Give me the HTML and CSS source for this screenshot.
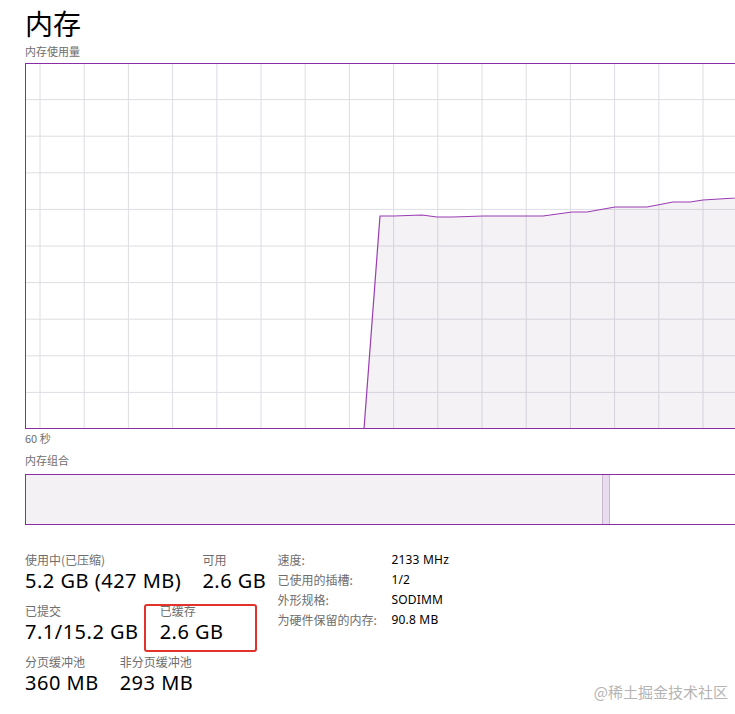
FILE: index.html
```html
<!DOCTYPE html>
<html lang="zh-CN">
<head>
  <meta charset="UTF-8">
  <title>内存</title>
  <link rel="stylesheet" href="styles.css">
</head>
<body>
  <div class="page">
    <h1 class="title">内存</h1>
    <div class="small-label">内存使用量</div>

    <!-- Usage history chart -->
    <div class="chart">
      <svg width="720" height="364" viewBox="0 0 720 364">
        <g class="grid">
          <line x1="14" y1="0" x2="14" y2="364"/>
          <line x1="58.2" y1="0" x2="58.2" y2="364"/>
          <line x1="102.4" y1="0" x2="102.4" y2="364"/>
          <line x1="146.6" y1="0" x2="146.6" y2="364"/>
          <line x1="190.8" y1="0" x2="190.8" y2="364"/>
          <line x1="235" y1="0" x2="235" y2="364"/>
          <line x1="279.2" y1="0" x2="279.2" y2="364"/>
          <line x1="323.4" y1="0" x2="323.4" y2="364"/>
          <line x1="367.6" y1="0" x2="367.6" y2="364"/>
          <line x1="411.8" y1="0" x2="411.8" y2="364"/>
          <line x1="456" y1="0" x2="456" y2="364"/>
          <line x1="500.2" y1="0" x2="500.2" y2="364"/>
          <line x1="544.4" y1="0" x2="544.4" y2="364"/>
          <line x1="588.6" y1="0" x2="588.6" y2="364"/>
          <line x1="632.8" y1="0" x2="632.8" y2="364"/>
          <line x1="677" y1="0" x2="677" y2="364"/>
          <line x1="0" y1="35.6" x2="720" y2="35.6"/>
          <line x1="0" y1="72.2" x2="720" y2="72.2"/>
          <line x1="0" y1="108.8" x2="720" y2="108.8"/>
          <line x1="0" y1="145.4" x2="720" y2="145.4"/>
          <line x1="0" y1="182" x2="720" y2="182"/>
          <line x1="0" y1="218.6" x2="720" y2="218.6"/>
          <line x1="0" y1="255.2" x2="720" y2="255.2"/>
          <line x1="0" y1="291.8" x2="720" y2="291.8"/>
          <line x1="0" y1="328.4" x2="720" y2="328.4"/>
        </g>
        <polygon class="area" points="338,365 354,152 368,152 396,151 411,153 427,153 457,152 517,152 546,148 561,148 589,143 621,143 647,138 664,138 677,136 709,134 720,133 720,365"/>
        <polyline class="usage" points="338,365 354,152 368,152 396,151 411,153 427,153 457,152 517,152 546,148 561,148 589,143 621,143 647,138 664,138 677,136 709,134 720,133"/>
      </svg>
    </div>
    <div class="small-label time-label">60 秒</div>

    <div class="small-label comp-label">内存组合</div>
    <div class="composition">
      <div class="seg in-use"></div>
      <div class="seg modified"></div>
      <div class="seg standby"></div>
    </div>

    <!-- Stats -->
    <div class="stats">
      <div class="stats-left">
        <div class="stat-row">
          <div class="stat">
            <div class="stat-label">使用中(已压缩)</div>
            <div class="stat-value">5.2 GB (427 MB)</div>
          </div>
          <div class="stat">
            <div class="stat-label">可用</div>
            <div class="stat-value">2.6 GB</div>
          </div>
        </div>
        <div class="stat-row">
          <div class="stat">
            <div class="stat-label">已提交</div>
            <div class="stat-value">7.1/15.2 GB</div>
          </div>
          <div class="stat highlighted">
            <div class="stat-label">已缓存</div>
            <div class="stat-value">2.6 GB</div>
          </div>
        </div>
        <div class="stat-row">
          <div class="stat">
            <div class="stat-label">分页缓冲池</div>
            <div class="stat-value">360 MB</div>
          </div>
          <div class="stat">
            <div class="stat-label">非分页缓冲池</div>
            <div class="stat-value">293 MB</div>
          </div>
        </div>
      </div>

      <div class="stats-right">
        <div class="info-row"><span class="info-key">速度:</span><span class="info-val">2133 MHz</span></div>
        <div class="info-row"><span class="info-key">已使用的插槽:</span><span class="info-val">1/2</span></div>
        <div class="info-row"><span class="info-key">外形规格:</span><span class="info-val">SODIMM</span></div>
        <div class="info-row"><span class="info-key">为硬件保留的内存:</span><span class="info-val">90.8 MB</span></div>
      </div>
    </div>
  </div>

  <div class="watermark">@稀土掘金技术社区</div>
</body>
</html>
```

FILE: styles.css
```css
/* Page base */
html, body {
  margin: 0;
  height: 100%;
  overflow: hidden;
  background: #fff;
}

body {
  font-family: "Segoe UI", "Noto Sans", "Noto Sans CJK SC", sans-serif;
  color: #000;
}

.page {
  padding: 3px 0 0 25px;
  width: 760px;
}

/* Heading */
.title {
  margin: 0;
  font-family: "Noto Sans CJK SC", sans-serif;
  font-size: 28px;
  font-weight: normal;
  line-height: 40px;
}

.small-label {
  font-family: "Noto Sans CJK SC", sans-serif;
  font-size: 11px;
  line-height: 16px;
  color: #6e6e6e;
}

/* Usage chart */
.chart {
  margin-top: 4px;
  width: 720px;
  height: 364px;
  border: 1px solid #8a2ca4;
  overflow: hidden;
}

.chart svg {
  display: block;
}

.grid line {
  stroke: #dedde3;
  stroke-width: 1;
}

.area {
  fill: rgba(110, 70, 130, 0.07);
}

.usage {
  fill: none;
  stroke: #9a3cb2;
  stroke-width: 1.2;
}

.time-label {
  margin-top: 1px;
}

.comp-label {
  margin-top: 6px;
}

/* Memory composition bar */
.composition {
  margin-top: 6px;
  width: 720px;
  height: 49px;
  border: 1px solid #8a2ca4;
  display: flex;
}

.seg.in-use {
  width: 576px;
  background: #f4f1f5;
}

.seg.modified {
  width: 6px;
  background: #eadcf0;
  border-left: 1px solid #c9b7cf;
  border-right: 1px solid #c9b7cf;
}

.seg.standby {
  flex: 1;
  background: #fff;
}

/* Stats area */
.stats {
  margin-top: 27px;
  display: flex;
  gap: 11px;
}

.stats-left {
  display: flex;
  flex-direction: column;
  gap: 9px;
}

.stat-row {
  display: flex;
  gap: 21px;
}

.stat {
  position: relative;
}

.stat-label {
  font-family: "Noto Sans CJK SC", sans-serif;
  font-size: 12px;
  line-height: 16px;
  color: #6e6e6e;
}

.stat-value {
  font-size: 20px;
  line-height: 26px;
  letter-spacing: 0.5px;
}

/* Red annotation box */
.highlighted::after {
  content: "";
  position: absolute;
  left: -16px;
  right: -33px;
  top: 1px;
  bottom: -7px;
  border: 2px solid #e3312b;
  border-radius: 3px;
}

.stats-right {
  display: flex;
  flex-direction: column;
  margin-top: -2px;
}

.info-row {
  display: flex;
  font-size: 12px;
  line-height: 20px;
}

.info-key {
  width: 114px;
  font-family: "Noto Sans CJK SC", sans-serif;
  color: #6e6e6e;
}

.info-val {
  color: #000;
  letter-spacing: 0.2px;
}

/* Watermark */
.watermark {
  position: absolute;
  right: 7px;
  bottom: 12px;
  font-family: "Noto Sans CJK SC", sans-serif;
  font-size: 15px;
  color: #b4b4b4;
}
```
